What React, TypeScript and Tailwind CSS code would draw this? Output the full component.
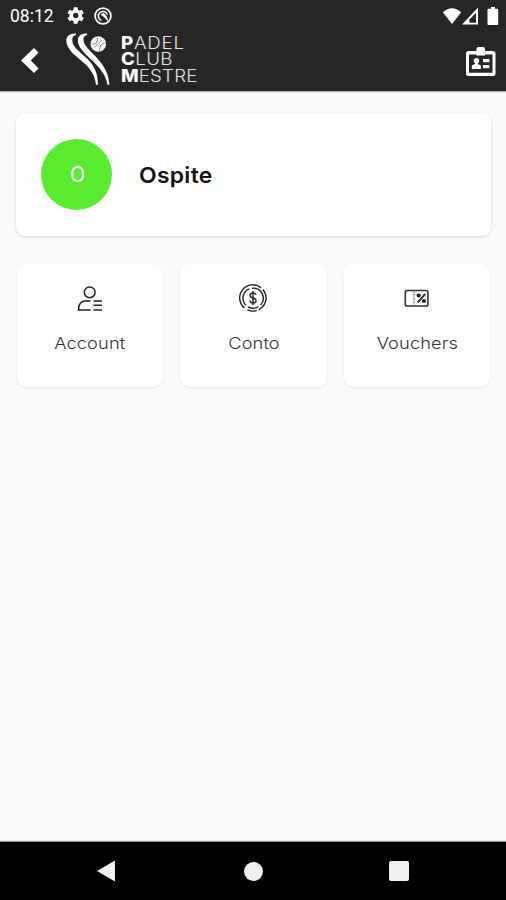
import type { ReactNode } from 'react';

function StatusBar() {
  return (
    <div className="flex h-[31px] items-center pl-[10px] pr-[7px] text-white">
      <span className="w-[57px] pt-[2px] font-['Roboto'] text-[17.5px] leading-none">08:12</span>
      <svg className="h-[17px] w-[17px]" viewBox="3.6 3 18 18" fill="currentColor">
        <path
          fillRule="evenodd"
          d="M19.4 13a7.6 7.6 0 0 0 0-2l2-1.6-2-3.5-2.5 1a7 7 0 0 0-1.7-1L14.8 3.3h-4L10.4 5.9a7 7 0 0 0-1.7 1l-2.5-1-2 3.5 2.1 1.6a7.6 7.6 0 0 0 0 2l-2.1 1.6 2 3.5 2.5-1a7 7 0 0 0 1.7 1l.4 2.6h4l.4-2.6a7 7 0 0 0 1.7-1l2.5 1 2-3.5zM12.8 14.8a2.8 2.8 0 1 1 0-5.6 2.8 2.8 0 0 1 0 5.6z"
        />
      </svg>
      <svg className="ml-[10px] h-[18px] w-[18px]" viewBox="0 0 18 18" fill="none" stroke="currentColor">
        <circle cx="9" cy="9" r="7.9" strokeWidth="1.7" />
        <path d="M7.5 13.4A4.6 4.6 0 1 1 13.3 7.5" strokeWidth="1.5" />
        <path d="M7 7.5l2.500-1.200 2.700 2.700 1.500 4.500-4.500-4.500z" fill="currentColor" strokeWidth="0.800" />
      </svg>
      <svg className="ml-auto h-[18px] w-[57px]" viewBox="0 0 57 18" fill="currentColor">
        <path d="M0.8 5.3Q10 -2.7 19.2 5.3L10 17z" />
        <path fillRule="evenodd" d="M36 0.5V17.5H20zM34 5.8L27.5 12.5V15.7H34z" />
        <path d="M46.500 1.800H49V0h4v1.800h2.200a1 1 0 0 1 1 1V17a1 1 0 0 1-1 1h-8.700a1 1 0 0 1-1-1V2.800a1 1 0 0 1 1-1z" />
      </svg>
    </div>
  );
}

function Logo() {
  return (
    <div className="flex items-start">
      <svg className="h-[54px] w-[46px]" viewBox="0 0 46 54" fill="none">
        <path
          d="M11 1.500C2.500 1-.5 6.500 2.500 14c6 13 27 18 28.500 39l1.900-.2C33.500 30 16 23.500 9.500 14.500 6 9 6.500 3.500 11 3z"
          fill="white"
        />
        <path
          d="M22 1.500C14 1 11 6.500 14 13.500c6 12 26 21 28.500 39.500l1.900-.2C43.500 32 27 23 20.500 13.500 17.500 8.500 18 3.500 22 3z"
          fill="white"
        />
        <circle cx="33.300" cy="12" r="7.800" fill="#f4f4f4" />
        <path d="M27 12q6 1 5.500-6M34.500 19q0-8 6-8M29.500 15.500L37 8" stroke="#888" strokeWidth="0.900" />
      </svg>
      <div className="ml-[10px] flex origin-left scale-x-[1.100] flex-col pt-[3px] text-[17px] font-light leading-[16.300px] text-[#e2e2e2]">
        <span className="tracking-[0.700px]"><b className="font-extrabold text-white">P</b>ADEL</span>
        <span className="tracking-[0.300px]"><b className="font-extrabold text-white">C</b>LUB</span>
        <span className="tracking-[0.150px]"><b className="font-extrabold text-white">M</b>ESTRE</span>
      </div>
    </div>
  );
}

function AppBar() {
  return (
    <header className="h-[91px] shrink-0 border-b border-[#222] bg-[#262626] shadow-[0_1px_1px_rgba(0,0,0,0.300)]">
      <StatusBar />
      <div className="flex items-start pl-[20px] pr-[10px]">
        <svg className="mt-[16px] h-[27px] w-[19px]" viewBox="0 0 19 27">
          <path d="M14 1L18.500 5.500 10.800 13.500 18.500 21.500 14 26 1 13.500z" fill="white" />
        </svg>
        <div className="ml-[26px] mt-[1px]">
          <Logo />
        </div>
        <svg className="ml-auto mt-[16px] h-[30px] w-[31px]" viewBox="0 0 31 30">
          <path
            fillRule="evenodd"
            fill="white"
            d="M3.500 4h8V2a2 2 0 0 1 2-2h4.500a2 2 0 0 1 2 2v2h8a2.500 2.500 0 0 1 2.500 2.500V26.500a2.500 2.500 0 0 1-2.500 2.500H3.500A2.500 2.500 0 0 1 1 26.500V6.500A2.500 2.500 0 0 1 3.500 4zM4 7.500V25.800H27.500V7.500H20V8.500H11.500V7.500z"
          />
          <circle cx="11.500" cy="13.700" r="2.700" fill="white" />
          <path d="M10.100 15h2.800v2l3 1.500v3.500H6.800v-3.500l3.300-1.500zM18 12h6.500v3.300H18zM18 18h6.500v3.300H18z" fill="white" />
        </svg>
      </div>
    </header>
  );
}

function AccountIcon() {
  return (
    <svg width="28" height="28" viewBox="0 0 28 28" fill="none" stroke="#222" strokeWidth="1.500">
      <circle cx="13.700" cy="8.300" r="5.400" />
      <path d="M14.500 17H9.500C4.500 17 2.500 20 2.500 26H14.500" />
      <path d="M17.500 17h8.500M17.500 21.300h8.500M17.500 26h8.500" />
    </svg>
  );
}

function CoinIcon() {
  return (
    <svg width="28" height="28" viewBox="0 0 28 28" fill="none" stroke="#222" strokeWidth="1.400">
      <path d="M5.500 24A13 13 0 0 1 22 3.700M23.800 5.500A13 13 0 0 1 20 25.600M17.800 26.600A13 13 0 0 1 8.500 25.800" />
      <path d="M6.800 21.200A10 10 0 0 1 10.500 4.800M13 4.200A10 10 0 0 1 21.500 21M19.500 22.500A10 10 0 0 1 9 22.800" />
      <path d="M17 10.800c-.5-1.500-1.500-1.800-3-1.800-4 0-4 4.500 0 5s4 5 0 5c-1.700 0-2.800-.7-3.200-2.300M14 7v14" />
    </svg>
  );
}

function VoucherIcon() {
  return (
    <svg width="28" height="28" viewBox="0 0 28 28" fill="none" stroke="#333" strokeWidth="1.600">
      <rect x="2.300" y="6.500" width="22.600" height="15.500" rx="1.800" />
      <path d="M11 6.500v15" stroke="#777" strokeWidth="1.200" strokeDasharray="2.500 1" />
      <path d="M14.700 18.500L22.200 10" strokeWidth="1.900" />
      <circle cx="15.700" cy="11.500" r="2.100" fill="#222" stroke="none" />
      <circle cx="21" cy="17" r="2.100" fill="#222" stroke="none" />
    </svg>
  );
}

function Tile({ label, children }: { label: string; children: ReactNode }) {
  return (
    <button className="flex h-[123px] flex-col items-center rounded-[10px] bg-white pt-[20px] shadow-[0_1px_2px_rgba(0,0,0,0.080)]">
      {children}
      <span className="mt-[20px] scale-x-[1.120] text-[16.300px] font-light leading-[22px] tracking-[0.100px] text-[#333]">
        {label}
      </span>
    </button>
  );
}

function NavBar() {
  return (
    <nav className="flex h-[58px] shrink-0 items-center justify-between bg-black px-[97px] shadow-[0_-1px_1px_rgba(0,0,0,0.400)]">
      <svg width="18" height="22" viewBox="0 0 18 22">
        <path d="M18 0.500V21.500L0 11z" fill="#f0f0f0" />
      </svg>
      <div className="ml-[3px] h-[19px] w-[19px] rounded-full bg-[#f0f0f0]" />
      <div className="h-[20px] w-[20px] rounded-[2px] bg-[#f0f0f0]" />
    </nav>
  );
}

export default function App() {
  return (
    <div className="flex h-[900px] w-[506px] flex-col overflow-hidden bg-[#fafafa] font-['Inter',sans-serif]">
      <AppBar />
      <main className="flex-1 pt-[22px]">
        <section className="ml-[16px] flex h-[123px] w-[475px] items-center rounded-[9px] bg-white pl-[25px] shadow-[0_1px_3px_rgba(0,0,0,0.150)]">
          <div className="flex h-[71px] w-[71px] items-center justify-center rounded-full bg-[#59eb2f] pl-[2px] font-['Roboto'] text-[22px] text-white">
            O
          </div>
          <h1 className="ml-[27px] mt-[2px] origin-left scale-x-[1.040] text-[22px] font-semibold tracking-[0.300px] text-[#111]">
            Ospite
          </h1>
        </section>
        <div className="ml-[17px] mt-[28px] grid w-[473px] grid-cols-3 gap-[17px]">
          <Tile label="Account"><AccountIcon /></Tile>
          <Tile label="Conto"><CoinIcon /></Tile>
          <Tile label="Vouchers"><VoucherIcon /></Tile>
        </div>
      </main>
      <NavBar />
    </div>
  );
}
